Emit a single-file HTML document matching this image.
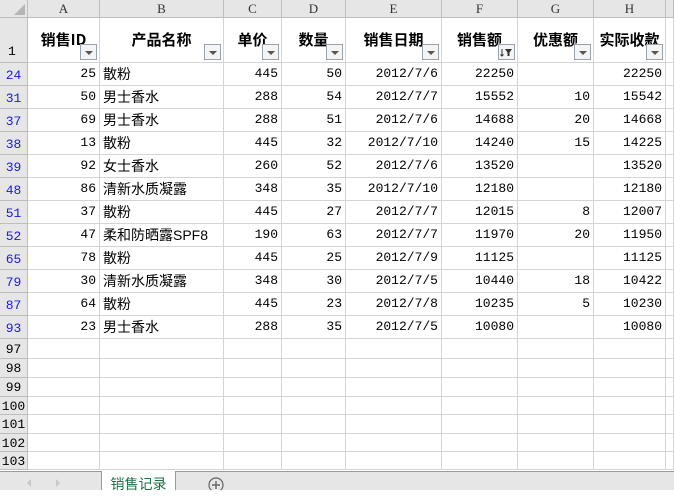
<!DOCTYPE html>
<html><head><meta charset="utf-8"><style>
*{box-sizing:border-box;margin:0;padding:0}
body{width:674px;height:490px;overflow:hidden;background:#fff;font-family:"Liberation Sans","Noto Sans CJK SC",sans-serif;position:relative}
.g{display:grid;grid-template-columns:28px 72px 124px 58px 64px 96px 76px 76px 72px 8px;grid-template-rows:18px 45px repeat(12,23px) 20px 19px 19px 18px 19px 18px 18px;position:absolute;left:0;top:0;width:674px}
.g>div{border-right:1px solid #d4d4d4;border-bottom:1px solid #d4d4d4;font-size:14px;white-space:nowrap;overflow:hidden;position:relative;line-height:22px;color:#000}
.ch{background:#e6e6e6;border-color:#bdbdbd!important;text-align:center;font-family:"Liberation Serif","Noto Serif CJK SC",serif;font-size:13px!important;line-height:18px!important;color:#333!important}
.rh{background:#e6e6e6;border-color:#bdbdbd!important;text-align:center;font-family:"Liberation Mono",monospace;font-size:13px!important;line-height:19px!important;padding-top:3px}
.b{color:#1a1ae6!important}
.n{text-align:right;padding-right:3px;font-family:"Liberation Mono",monospace;font-size:13px!important}
.t{padding-left:3px}
.h{font-family:"Noto Sans CJK SC",sans-serif;font-weight:bold;font-size:15px!important;text-align:center;padding-top:11px}
.dd{position:absolute;right:2px;bottom:2px;width:17px;height:16px;border:1px solid #9aa3ad;background:#f4f4f4}
.dd:after{content:"";position:absolute;left:4px;top:6px;border-left:4px solid transparent;border-right:4px solid transparent;border-top:4px solid #555}
.df:after{display:none}
</style></head><body>
<div class="g">
<div class="ch"><svg width="28" height="18" style="position:absolute;left:0;top:0"><polygon points="25,4 25,15 14,15" fill="#b5b5b5"/></svg></div><div class="ch">A</div><div class="ch">B</div><div class="ch">C</div><div class="ch">D</div><div class="ch">E</div><div class="ch">F</div><div class="ch">G</div><div class="ch">H</div><div class="ch"></div>
<div class="rh" style="padding-top:24px;text-align:left;padding-left:8px">1</div><div class="h">销售ID<span class="dd"></span></div><div class="h">产品名称<span class="dd"></span></div><div class="h">单价<span class="dd"></span></div><div class="h">数量<span class="dd"></span></div><div class="h">销售日期<span class="dd"></span></div><div class="h">销售额<span class="dd df"><svg width="15" height="14" style="position:absolute;left:0;top:0"><path d="M3 4v7M1.5 9.5L3 11l1.5-1.5" stroke="#333" fill="none"/><polygon points="6,4 13,4 10.5,7.5 10.5,11 8.5,11 8.5,7.5" fill="#333"/></svg></span></div><div class="h">优惠额<span class="dd"></span></div><div class="h">实际收款<span class="dd"></span></div><div></div>
<div class="rh b">24</div><div class="n">25</div><div class="t">散粉</div><div class="n">445</div><div class="n">50</div><div class="n">2012/7/6</div><div class="n">22250</div><div class="n"></div><div class="n">22250</div><div></div>
<div class="rh b">31</div><div class="n">50</div><div class="t">男士香水</div><div class="n">288</div><div class="n">54</div><div class="n">2012/7/7</div><div class="n">15552</div><div class="n">10</div><div class="n">15542</div><div></div>
<div class="rh b">37</div><div class="n">69</div><div class="t">男士香水</div><div class="n">288</div><div class="n">51</div><div class="n">2012/7/6</div><div class="n">14688</div><div class="n">20</div><div class="n">14668</div><div></div>
<div class="rh b">38</div><div class="n">13</div><div class="t">散粉</div><div class="n">445</div><div class="n">32</div><div class="n">2012/7/10</div><div class="n">14240</div><div class="n">15</div><div class="n">14225</div><div></div>
<div class="rh b">39</div><div class="n">92</div><div class="t">女士香水</div><div class="n">260</div><div class="n">52</div><div class="n">2012/7/6</div><div class="n">13520</div><div class="n"></div><div class="n">13520</div><div></div>
<div class="rh b">48</div><div class="n">86</div><div class="t">清新水质凝露</div><div class="n">348</div><div class="n">35</div><div class="n">2012/7/10</div><div class="n">12180</div><div class="n"></div><div class="n">12180</div><div></div>
<div class="rh b">51</div><div class="n">37</div><div class="t">散粉</div><div class="n">445</div><div class="n">27</div><div class="n">2012/7/7</div><div class="n">12015</div><div class="n">8</div><div class="n">12007</div><div></div>
<div class="rh b">52</div><div class="n">47</div><div class="t">柔和防晒露SPF8</div><div class="n">190</div><div class="n">63</div><div class="n">2012/7/7</div><div class="n">11970</div><div class="n">20</div><div class="n">11950</div><div></div>
<div class="rh b">65</div><div class="n">78</div><div class="t">散粉</div><div class="n">445</div><div class="n">25</div><div class="n">2012/7/9</div><div class="n">11125</div><div class="n"></div><div class="n">11125</div><div></div>
<div class="rh b">79</div><div class="n">30</div><div class="t">清新水质凝露</div><div class="n">348</div><div class="n">30</div><div class="n">2012/7/5</div><div class="n">10440</div><div class="n">18</div><div class="n">10422</div><div></div>
<div class="rh b">87</div><div class="n">64</div><div class="t">散粉</div><div class="n">445</div><div class="n">23</div><div class="n">2012/7/8</div><div class="n">10235</div><div class="n">5</div><div class="n">10230</div><div></div>
<div class="rh b">93</div><div class="n">23</div><div class="t">男士香水</div><div class="n">288</div><div class="n">35</div><div class="n">2012/7/5</div><div class="n">10080</div><div class="n"></div><div class="n">10080</div><div></div>
<div class="rh" style="padding-top:1px">97</div><div></div><div></div><div></div><div></div><div></div><div></div><div></div><div></div><div></div>
<div class="rh" style="padding-top:0">98</div><div></div><div></div><div></div><div></div><div></div><div></div><div></div><div></div><div></div>
<div class="rh" style="padding-top:0">99</div><div></div><div></div><div></div><div></div><div></div><div></div><div></div><div></div><div></div>
<div class="rh" style="padding-top:0">100</div><div></div><div></div><div></div><div></div><div></div><div></div><div></div><div></div><div></div>
<div class="rh" style="padding-top:0">101</div><div></div><div></div><div></div><div></div><div></div><div></div><div></div><div></div><div></div>
<div class="rh" style="padding-top:0">102</div><div></div><div></div><div></div><div></div><div></div><div></div><div></div><div></div><div></div>
<div class="rh" style="padding-top:0">103</div><div></div><div></div><div></div><div></div><div></div><div></div><div></div><div></div><div></div>
</div>
<div style="position:absolute;left:0;top:471px;width:674px;height:19px;background:#e6e6e6;border-top:1px solid #9a9a9a"></div>
<div style="position:absolute;left:27px;top:479px;width:0;height:0;border-top:4px solid transparent;border-bottom:4px solid transparent;border-right:4px solid #c8c8c8"></div>
<div style="position:absolute;left:56px;top:479px;width:0;height:0;border-top:4px solid transparent;border-bottom:4px solid transparent;border-left:4px solid #c8c8c8"></div>
<div style="position:absolute;left:101px;top:471px;width:75px;height:19px;background:#fff;border-left:1px solid #9a9a9a;border-right:1px solid #9a9a9a;color:#1e7145;font-size:14px;text-align:center;line-height:26px;font-family:'Noto Sans CJK SC',sans-serif">销售记录</div>
<svg style="position:absolute;left:207px;top:476px" width="18" height="14"><circle cx="9" cy="9" r="7" fill="none" stroke="#666" stroke-width="1.2"/><path d="M9 5v8M5 9h8" stroke="#666" stroke-width="1.4"/></svg>
</body></html>
